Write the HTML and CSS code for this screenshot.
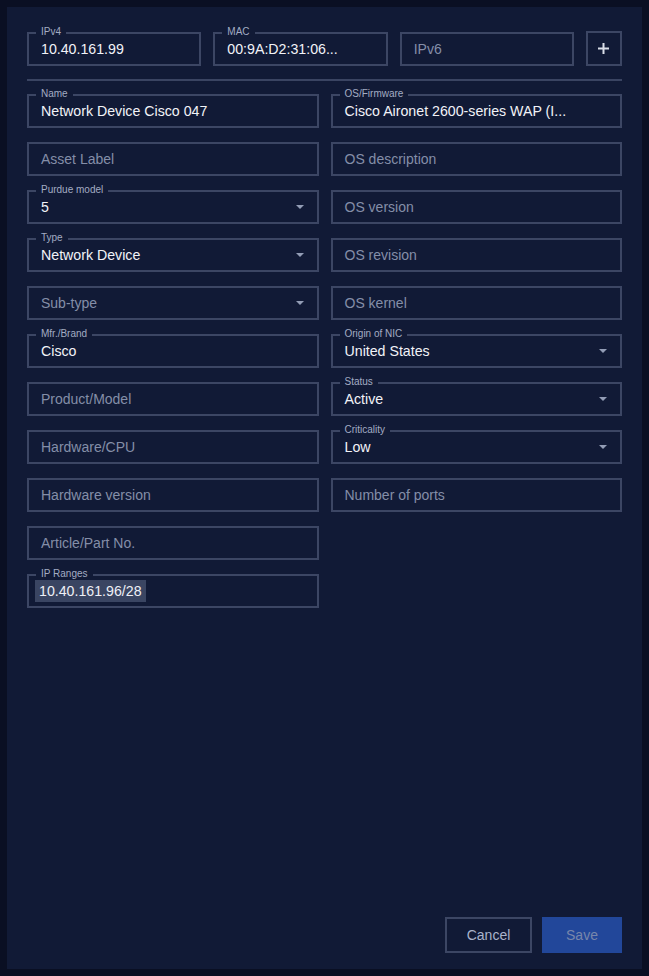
FILE: index.html
```html
<!DOCTYPE html>
<html>
<head>
<meta charset="utf-8">
<link rel="stylesheet" href="styles.css">
</head>
<body>
<div class="panel">
  <div class="top-row">
    <div class="field"><span class="label">IPv4</span><span class="value">10.40.161.99</span></div>
    <div class="field"><span class="label">MAC</span><span class="value">00:9A:D2:31:06...</span></div>
    <div class="field"><span class="placeholder">IPv6</span></div>
    <div class="field plus"><svg width="11" height="11" viewBox="0 0 11 11"><path d="M5.5 0v11M0 5.5h11" stroke="#d9dde7" stroke-width="2"/></svg></div>
  </div>
  <div class="divider"></div>
  <div class="grid">
    <div class="field"><span class="label">Name</span><span class="value">Network Device Cisco 047</span></div>
    <div class="field"><span class="label">OS/Firmware</span><span class="value">Cisco Aironet 2600-series WAP (I...</span></div>

    <div class="field"><span class="placeholder">Asset Label</span></div>
    <div class="field"><span class="placeholder">OS description</span></div>

    <div class="field select"><span class="label">Purdue model</span><span class="value">5</span><span class="arrow"></span></div>
    <div class="field"><span class="placeholder">OS version</span></div>

    <div class="field select"><span class="label">Type</span><span class="value">Network Device</span><span class="arrow"></span></div>
    <div class="field"><span class="placeholder">OS revision</span></div>

    <div class="field select"><span class="placeholder">Sub-type</span><span class="arrow"></span></div>
    <div class="field"><span class="placeholder">OS kernel</span></div>

    <div class="field"><span class="label">Mfr./Brand</span><span class="value">Cisco</span></div>
    <div class="field select"><span class="label">Origin of NIC</span><span class="value">United States</span><span class="arrow"></span></div>

    <div class="field"><span class="placeholder">Product/Model</span></div>
    <div class="field select"><span class="label">Status</span><span class="value">Active</span><span class="arrow"></span></div>

    <div class="field"><span class="placeholder">Hardware/CPU</span></div>
    <div class="field select"><span class="label">Criticality</span><span class="value">Low</span><span class="arrow"></span></div>

    <div class="field"><span class="placeholder">Hardware version</span></div>
    <div class="field"><span class="placeholder">Number of ports</span></div>

    <div class="field"><span class="placeholder">Article/Part No.</span></div>
    <div class="empty"></div>

    <div class="field"><span class="label">IP Ranges</span><span class="chip">10.40.161.96/28</span></div>
  </div>
  <div class="footer">
    <button class="btn cancel">Cancel</button>
    <button class="btn save">Save</button>
  </div>
</div>
</body>
</html>
```

FILE: styles.css
```css
html, body {
  margin: 0;
  padding: 0;
  background: #0a0f23;
  font-family: "Liberation Sans", Arial, sans-serif;
}

.panel {
  box-sizing: border-box;
  margin: 7px;
  width: 635px;
  height: 962px;
  background: #111a36;
  padding: 25px 20px 16px 20px;
  display: flex;
  flex-direction: column;
}

.top-row {
  display: grid;
  grid-template-columns: 1fr 1fr 1fr 36px;
  column-gap: 12px;
}

.divider {
  height: 2px;
  background: #3a4462;
  margin: 13px 0 13px 0;
}

.grid {
  display: grid;
  grid-template-columns: 1fr 1fr;
  column-gap: 12px;
  row-gap: 14px;
}

.field {
  position: relative;
  box-sizing: border-box;
  height: 34px;
  border: 2px solid #3c4664;
  padding: 0 12px;
  display: flex;
  align-items: center;
  font-size: 14px;
  line-height: 18px;
  white-space: nowrap;
}

.field.plus {
  justify-content: center;
  padding: 0;
  height: 35px;
  margin-top: -1px;
}

.label {
  position: absolute;
  left: 7px;
  top: -8px;
  padding: 0 5px;
  background: #111a36;
  font-size: 10px;
  line-height: 12px;
  color: #a3acc3;
}

.value {
  color: #f1f3f8;
  font-size: 14.2px;
}

.placeholder {
  color: #848ea8;
}

.select .arrow {
  position: absolute;
  right: 13px;
  top: 13px;
  width: 0;
  height: 0;
  border-left: 4px solid transparent;
  border-right: 4px solid transparent;
  border-top: 4px solid #939db6;
}

.chip {
  margin-left: -6px;
  padding: 2px 4px;
  background: #3a4562;
  color: #eef0f6;
  font-size: 14.2px;
}

.footer {
  margin-top: auto;
  display: flex;
  justify-content: flex-end;
  gap: 10px;
}

.btn {
  box-sizing: border-box;
  height: 36px;
  font-family: "Liberation Sans", Arial, sans-serif;
  font-size: 14px;
  cursor: pointer;
}

.cancel {
  width: 87px;
  background: transparent;
  border: 2px solid #3c4664;
  color: #a9b3cb;
}

.save {
  width: 80px;
  background: #22479a;
  border: none;
  color: #7786ab;
}
```
